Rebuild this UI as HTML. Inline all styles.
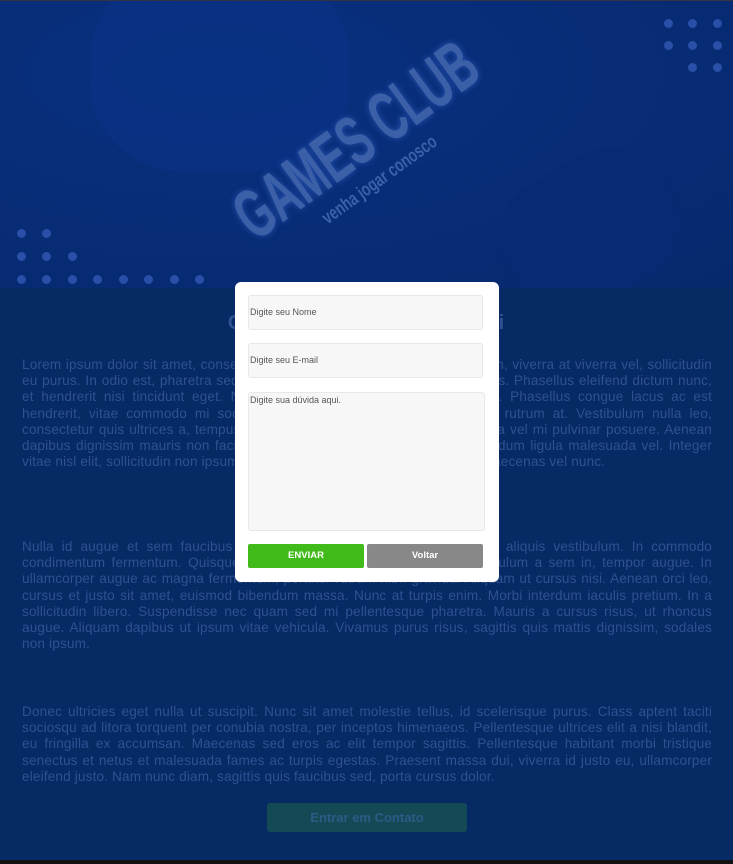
<!DOCTYPE html>
<html><head><meta charset="utf-8"><style>
*{margin:0;padding:0;box-sizing:border-box}
body{width:733px;height:864px;background:#062a64;font-family:"Liberation Sans",sans-serif;overflow:hidden;position:relative}
.hero{position:absolute;left:0;top:0;width:733px;height:288px;background:radial-gradient(ellipse at 30% 25%,#09317f 0%,#082d78 45%,#06296c 100%);overflow:hidden;border-top:1px solid #334}
.dot{position:absolute;width:9px;height:9px;border-radius:50%;background:#2a4fa8}
.title{position:absolute;color:#3c60a8;font-weight:bold;font-size:70px;white-space:nowrap;transform-origin:left bottom;transform:rotate(-36deg) scaleX(.6);text-shadow:0 0 8px #2a55b0;line-height:70px}
.sub{position:absolute;color:#3c60a8;font-weight:bold;font-size:19px;white-space:nowrap;transform-origin:left bottom;transform:rotate(-36deg) scaleX(.72);line-height:19px}
.content{position:absolute;left:22px;top:0;width:690px;color:#2f5192;font-size:13.6px;line-height:16.2px;text-align:justify;letter-spacing:.15px}
.content p{position:absolute;left:0;width:690px}
h2{position:absolute;top:312px;left:0;width:733px;text-align:center;color:#2f5192;font-size:20px;letter-spacing:1px}
.btn{position:absolute;left:267px;top:803px;width:200px;height:29px;background:#134a55;border-radius:3px;color:#2f5a86;font-weight:bold;font-size:13px;text-align:center;line-height:29px}
.strip{position:absolute;left:0;top:860px;width:733px;height:4px;background:#111}
.modal{position:absolute;left:235px;top:282px;width:264px;height:300px;background:#fff;border-radius:6px}
.in{position:absolute;left:13px;width:235px;background:#f7f7f7;border:1px solid #e8e8e8;border-radius:3px;font-size:9px;color:#555;padding-left:1px}
.b{position:absolute;top:262px;height:24px;width:116px;border-radius:2px;color:#fff;font-weight:bold;font-size:9.5px;text-align:center;line-height:24px}
</style></head><body>
<div class="hero">
<div style="position:absolute;left:90px;top:-30px;width:260px;height:200px;border-radius:90px;background:#0a338a;opacity:.45"></div>
<div style="position:absolute;left:500px;top:160px;width:180px;height:140px;border-radius:60px;background:#072a72;transform:rotate(-30deg)"></div>
<div class="dot" style="left:664px;top:18px"></div><div class="dot" style="left:688px;top:18px"></div><div class="dot" style="left:713px;top:18px"></div>
<div class="dot" style="left:664px;top:40px"></div><div class="dot" style="left:688px;top:40px"></div><div class="dot" style="left:713px;top:40px"></div>
<div class="dot" style="left:688px;top:62px"></div><div class="dot" style="left:713px;top:62px"></div>
<div class="dot" style="left:17px;top:228px"></div><div class="dot" style="left:42px;top:228px"></div>
<div class="dot" style="left:17px;top:251px"></div><div class="dot" style="left:42px;top:251px"></div><div class="dot" style="left:68px;top:251px"></div>
<div class="dot" style="left:17px;top:274px"></div><div class="dot" style="left:42px;top:274px"></div><div class="dot" style="left:68px;top:274px"></div><div class="dot" style="left:93px;top:274px"></div><div class="dot" style="left:119px;top:274px"></div><div class="dot" style="left:144px;top:274px"></div><div class="dot" style="left:170px;top:274px"></div><div class="dot" style="left:195px;top:274px"></div>
<div class="title" style="left:262px;top:180px">GAMES CLUB</div>
<div class="sub" style="left:330px;top:208px">venha jogar conosco</div>
</div>
<h2>Conheça nosso clube aqui</h2>
<div class="content">
<p style="top:357px">Lorem ipsum dolor sit amet, consectetur adipiscing elit. Vivamus at justo nibh, viverra at viverra vel, sollicitudin eu purus. In odio est, pharetra sed ultrices in, tincidunt aliquet aliquam metus. Phasellus eleifend dictum nunc, et hendrerit nisi tincidunt eget. Nulla facilisi. Integer et sapien eu mattis. Phasellus congue lacus ac est hendrerit, vitae commodo mi sodales. Nam a elit nisl, ac lobortis tellus rutrum at. Vestibulum nulla leo, consectetur quis ultrices a, tempus eget massa non est. Mauris ultricies urna vel mi pulvinar posuere. Aenean dapibus dignissim mauris non facilisis. Nullam dapibus risus ante, sed interdum ligula malesuada vel. Integer vitae nisl elit, sollicitudin non ipsum. Curabitur imperdiet in ligula vel porta. Maecenas vel nunc.</p>
<p style="top:539px">Nulla id augue et sem faucibus tincidunt. Sed ut lectus in justo aliquet aliquis vestibulum. In commodo condimentum fermentum. Quisque sit amet ante vitae nisl posuere. Vestibulum a sem in, tempor augue. In ullamcorper augue ac magna fermentum, porttitor rutrum nibh gravida. Aliquam ut cursus nisi. Aenean orci leo, cursus et justo sit amet, euismod bibendum massa. Nunc at turpis enim. Morbi interdum iaculis pretium. In a sollicitudin libero. Suspendisse nec quam sed mi pellentesque pharetra. Mauris a cursus risus, ut rhoncus augue. Aliquam dapibus ut ipsum vitae vehicula. Vivamus purus risus, sagittis quis mattis dignissim, sodales non ipsum.</p>
<p style="top:704px">Donec ultricies eget nulla ut suscipit. Nunc sit amet molestie tellus, id scelerisque purus. Class aptent taciti sociosqu ad litora torquent per conubia nostra, per inceptos himenaeos. Pellentesque ultrices elit a nisi blandit, eu fringilla ex accumsan. Maecenas sed eros ac elit tempor sagittis. Pellentesque habitant morbi tristique senectus et netus et malesuada fames ac turpis egestas. Praesent massa dui, viverra id justo eu, ullamcorper eleifend justo. Nam nunc diam, sagittis quis faucibus sed, porta cursus dolor.</p>
</div>
<div class="btn">Entrar em Contato</div>
<div class="strip"></div>
<div class="modal">
<div class="in" style="top:13px;height:35px;line-height:33px">Digite seu Nome</div>
<div class="in" style="top:61px;height:35px;line-height:33px">Digite seu E-mail</div>
<div class="in" style="top:110px;height:139px;width:237px;padding-top:2px">Digite sua dúvida aqui.</div>
<div class="b" style="left:13px;background:#41bb1a">ENVIAR</div>
<div class="b" style="left:132px;background:#888">Voltar</div>
</div>
</body></html>
